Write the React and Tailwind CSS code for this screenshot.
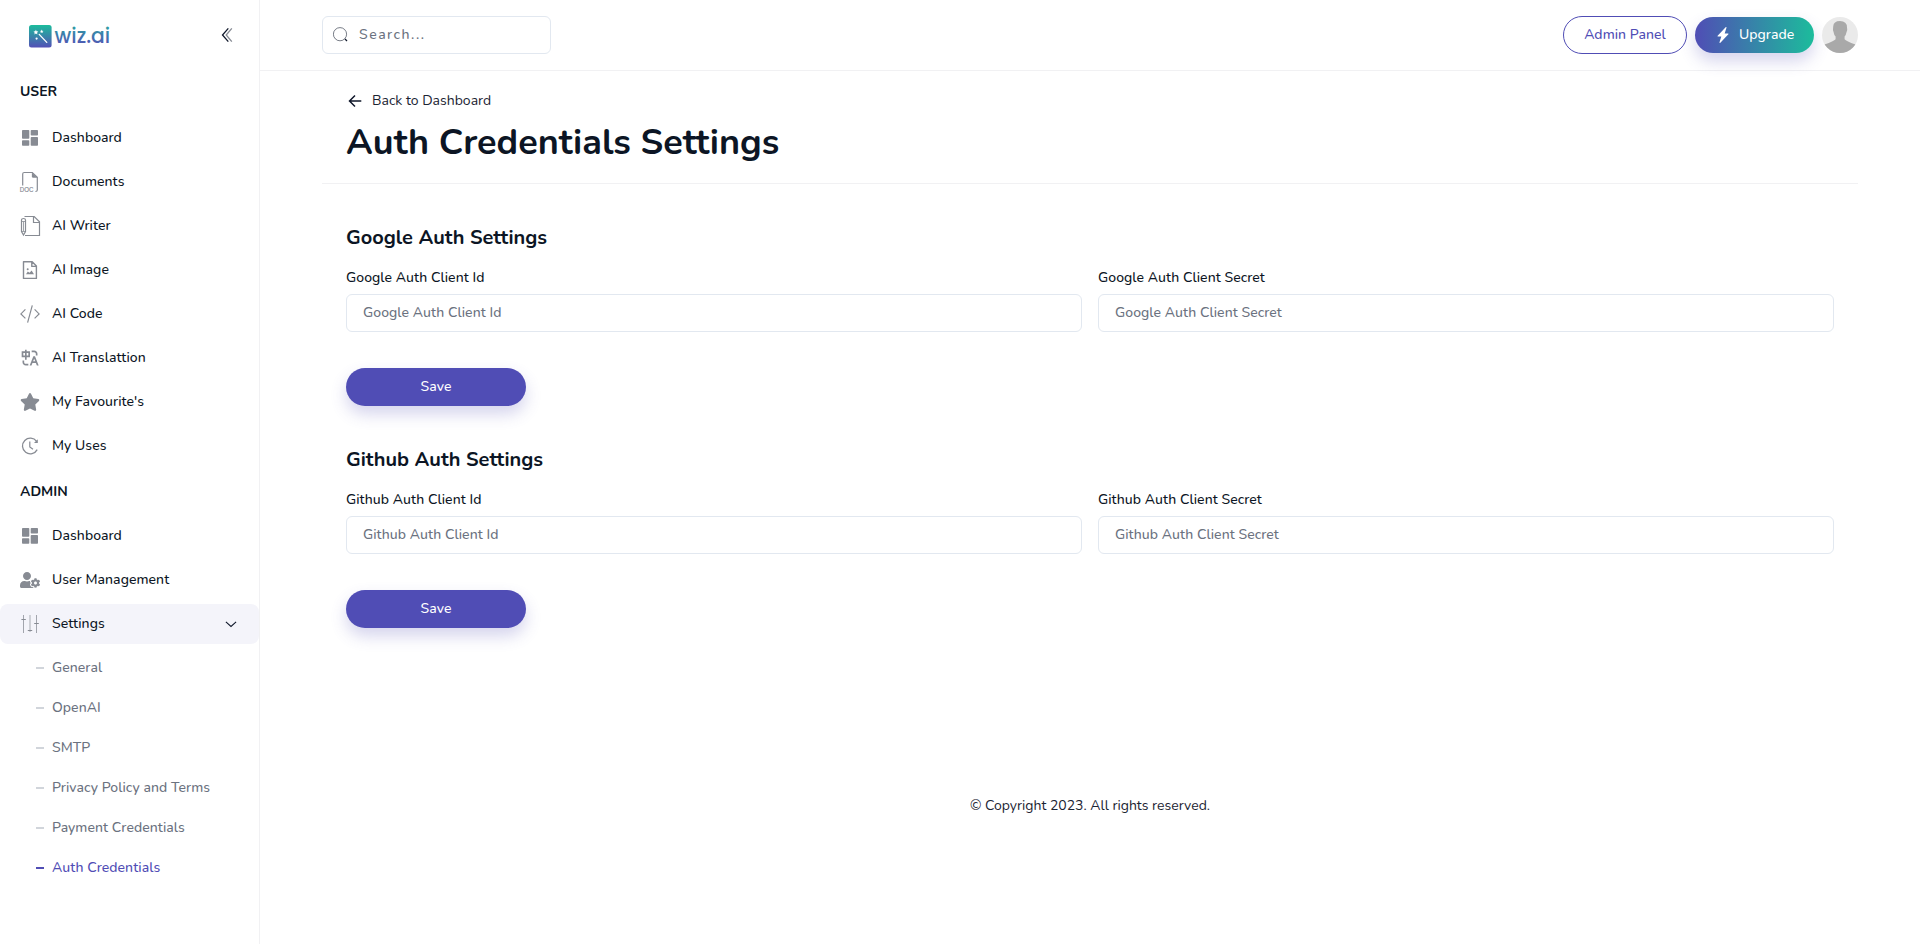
import React from "react";
import { RiTranslate } from "react-icons/ri";
import { FaUserCog, FaStar } from "react-icons/fa";
import { BsLightningChargeFill } from "react-icons/bs";

const Svg = ({ children }) => (
  <svg className="size-5 shrink-0 overflow-visible" viewBox="0 0 20 20" fill="none" stroke="currentColor">
    {children}
  </svg>
);

const DashboardIcon = () => (
  <Svg>
    <g fill="currentColor" stroke="none">
      <rect x="2" y="2" width="7.3" height="8.7" rx="0.8" />
      <rect x="2" y="12.3" width="7.3" height="5.5" rx="0.8" />
      <rect x="10.7" y="2" width="7.3" height="5.5" rx="0.8" />
      <rect x="10.7" y="9.1" width="7.3" height="8.7" rx="0.8" />
    </g>
  </Svg>
);

const DocumentIcon = () => (
  <Svg>
    <path d="M2.7 13.6V2.1Q2.7 .5 4.3 .5H12.3L17.3 5.3V18Q17.3 19.5 15.4 19.5" strokeWidth="1.2" />
    <path d="M11.9 .4L17.4 5.7H13.2Q11.9 5.7 11.9 4.4Z" fill="currentColor" stroke="none" />
    <text x="-0.3" y="19.8" fontSize="7" textLength="13.8" lengthAdjust="spacingAndGlyphs" fill="currentColor" strokeWidth="0.15" fontFamily="Liberation Sans, sans-serif">DOC</text>
  </Svg>
);

const WriterIcon = () => (
  <Svg>
    <path d="M4.5 .5H14.2L19.5 5.8V19.5H5M13.5 .6V6.5H19.4" strokeWidth="1.2" />
    <path d="M1.5 4V15.5L3.5 19L5.5 15.5V4Q5.5 2.5 3.5 2.5T1.5 4Z" strokeWidth="1.2" />
    <path d="M1.5 5.5H5.5M3.5 5.5V15M1.5 15.5H5.5" strokeWidth=".8" />
  </Svg>
);

const ImageIcon = () => (
  <Svg>
    <path d="M3.5 1.8H12.2L16.4 6V18.4H3.5ZM11.8 2V6.4H16.2" strokeWidth="1.4" strokeLinejoin="round" />
    <path d="M6 14.3L7.8 11.4L9.6 12.8L11.6 10.4L14 14.3Z" fill="currentColor" stroke="none" />
    <circle cx="7.7" cy="9.2" r="1" fill="currentColor" stroke="none" />
  </Svg>
);

const CodeIcon = () => (
  <Svg>
    <path d="M5.4 5.4L.9 9.9L5.4 14.4M14.6 5.4L19.1 9.9L14.6 14.4M12.3 1.4L7.6 18.6" strokeWidth="1.2" />
  </Svg>
);

const ClockIcon = () => (
  <Svg>
    <path d="M17.2 13.6A7.8 7.8 0 1 1 16.6 5.4" strokeWidth="1.3" />
    <path d="M17.8 3.2V7H14Z" fill="currentColor" stroke="none" />
    <path d="M9.8 5.6V11L13 13.2" strokeWidth="1.2" />
  </Svg>
);

const SlidersIcon = () => (
  <Svg>
    <path d="M3.5 1V19M16.5 1V19" strokeWidth="1" opacity=".75" />
    <path d="M10 1V18" strokeWidth="2" opacity=".35" />
    <path d="M1.4 5.5H5.8M7.8 16.5H12.2M14.2 9.5H18.8" strokeWidth="1.2" />
  </Svg>
);

const userItems = [
  ["Dashboard", DashboardIcon],
  ["Documents", DocumentIcon],
  ["AI Writer", WriterIcon],
  ["AI Image", ImageIcon],
  ["AI Code", CodeIcon],
  ["AI Translattion", () => <RiTranslate className="size-5 shrink-0" />],
  ["My Favourite's", () => <FaStar className="size-5 shrink-0" />],
  ["My Uses", ClockIcon],
];
const adminItems = [
  ["Dashboard", DashboardIcon],
  ["User Management", () => <FaUserCog className="size-5 shrink-0" />],
];
const subItems = ["General", "OpenAI", "SMTP", "Privacy Policy and Terms", "Payment Credentials", "Auth Credentials"];

function NavItem({ label, icon: Icon, active }) {
  return (
    <a className={`flex h-10 items-center rounded-lg pl-5 pr-[22px] text-sm font-medium tracking-[0.05px] ${active ? "bg-[#f4f4fa]" : ""}`}>
      <span className="text-[#878b93]"><Icon /></span>
      <span className="ml-3 flex-1 pb-px">{label}</span>
      {active && (
        <svg className="h-2 w-3" viewBox="0 0 12 8" fill="none" stroke="#0f172a" strokeWidth="1.1">
          <path d="M.9 1.9L6 6.4L11.1 1.9" />
        </svg>
      )}
    </a>
  );
}

function Logo() {
  return (
    <svg className="h-8 w-24" viewBox="0 0 96 32">
      <defs>
        <linearGradient id="tile" x1="0" y1="0" x2="0" y2="1">
          <stop offset="0" stopColor="#1cbc9c" />
          <stop offset="1" stopColor="#5350b6" />
        </linearGradient>
        <linearGradient id="word" gradientUnits="userSpaceOnUse" x1="0" y1="6" x2="0" y2="27">
          <stop offset="0" stopColor="#2aa3a2" />
          <stop offset="1" stopColor="#5350b6" />
        </linearGradient>
      </defs>
      <rect x="1" y="6" width="22.6" height="22.4" rx="2.5" fill="url(#tile)" />
      <path d="M11.2 15.4L18.8 23.4" stroke="#fff" strokeWidth="1.3" strokeLinecap="round" />
      <path d="M7.9 10.7l.7 1.6 1.7.2-1.2 1.2.3 1.7-1.5-.9-1.5.9.3-1.7-1.2-1.2 1.7-.2z" fill="#fff" />
      <path d="M13.7 10.6l.5 1.2 1.3.1-1 .9.3 1.3-1.1-.7-1.1.7.3-1.3-1-.9 1.3-.1z" fill="#fff" />
      <circle cx="8.6" cy="19.6" r="1.1" fill="#fff" />
      <text x="26.6" y="24.3" fontSize="22" fontWeight="500" fontFamily="Poppins, Quicksand, Nunito, Lato, sans-serif" textLength="55.6" lengthAdjust="spacingAndGlyphs" fill="url(#word)">wiz.ai</text>
    </svg>
  );
}

function Sidebar() {
  return (
    <aside className="flex w-[260px] shrink-0 flex-col border-r border-[#f1f1f3]">
      <div className="flex h-[70px] items-center justify-between pl-7 pr-[26px]">
        <Logo />
        <svg className="h-4 w-3" viewBox="0 0 12 16" fill="none" stroke="#0f172a" strokeWidth="1.3">
          <path d="M7.3 1.4L1.5 8L7.3 14.6" />
          <path d="M10.8 1.4L5.2 8L10.8 14.6" opacity=".5" />
        </svg>
      </div>
      <h2 className="mt-3 pl-5 text-sm font-bold">USER</h2>
      <nav className="mt-4 flex flex-col gap-1">
        {userItems.map(([l, I]) => <NavItem key={l} label={l} icon={I} />)}
      </nav>
      <h2 className="mt-4 pl-5 text-sm font-bold">ADMIN</h2>
      <nav className="mt-[14px] flex flex-col gap-1">
        {adminItems.map(([l, I]) => <NavItem key={l} label={l} icon={I} />)}
        <NavItem label="Settings" icon={SlidersIcon} active />
        <div>
          {subItems.map((l) => {
            const on = l === "Auth Credentials";
            return (
              <a key={l} className={`flex h-10 items-center gap-2 pl-9 text-sm font-medium tracking-[0.05px] ${on ? "text-[#504db5]" : "text-[#6b7280]"}`}>
                <span className={`h-0.5 w-2 ${on ? "bg-[#504db5]" : "bg-[#d1d5db]"}`} />
                <span className="pb-px">{l}</span>
              </a>
            );
          })}
        </div>
      </nav>
    </aside>
  );
}

function Header() {
  return (
    <header className="border-b border-[#f1f1f3]">
      <div className="mx-auto flex h-[70px] max-w-[1536px] items-center justify-between">
        <div className="flex h-[38px] w-[229px] items-center rounded-md border border-[#e2e8f0] pl-2.5">
          <svg className="size-4" viewBox="0 0 16 16" fill="none" stroke="#0f172a">
            <circle cx="7" cy="7.2" r="6.6" strokeWidth=".7" opacity=".8" />
            <path d="M12 12L14 14" strokeWidth="1.3" />
          </svg>
          <span className="ml-2.5 pb-px text-sm font-medium tracking-[1.5px] text-[#6b7280]">Search...</span>
        </div>
        <div className="flex items-center gap-2">
          <button className="h-[38px] w-[124px] rounded-full border border-[#504db5] pb-px text-sm font-medium tracking-[0.05px] text-[#504db5]">Admin Panel</button>
          <button className="flex h-9 w-[119px] items-center rounded-full bg-linear-to-r/srgb from-[#504db5] to-[#1cbc9c] pl-5 text-sm font-medium tracking-[0.05px] text-white shadow-[0_8px_16px_rgba(80,77,181,0.24)]">
            <BsLightningChargeFill className="size-4" />
            <span className="ml-2 pb-px">Upgrade</span>
          </button>
          <svg className="size-9 rounded-full" viewBox="0 0 36 36">
            <rect width="36" height="36" fill="#eaeaea" />
            <path d="M18 4Q25 4 25 10.5Q25.8 13 24.4 15.4Q24 18 22.6 19.6V22.2Q24 24 33.5 27.5V36H2.5V27.5Q12 24 13.6 22.2V19.6Q12 18 11.7 15.4Q10.5 13 11.2 9.5Q11.5 4 18 4Z" fill="#a9a9a9" />
          </svg>
        </div>
      </div>
    </header>
  );
}

function Field({ label }) {
  return (
    <label className="block text-sm font-medium tracking-[0.05px]">
      {label}
      <input placeholder={label} className="mt-1.5 block h-[38px] w-full rounded-md border border-[#e2e8f0] px-4 pb-px tracking-[0.05px] placeholder:text-[#6b7280]" />
    </label>
  );
}

function Section({ name }) {
  return (
    <section className="h-[222px]">
      <h2 className="text-xl font-bold leading-7">{name} Auth Settings</h2>
      <div className="mt-4 grid grid-cols-2 gap-4">
        <Field label={`${name} Auth Client Id`} />
        <Field label={`${name} Auth Client Secret`} />
      </div>
      <button className="mt-9 h-[38px] w-[180px] rounded-full bg-[#504db5] pb-px text-sm font-medium tracking-[0.05px] text-white shadow-[0_8px_16px_rgba(80,77,181,0.24)]">Save</button>
    </section>
  );
}

export default function App() {
  return (
    <div className="flex h-[944px] overflow-hidden bg-white font-['Nunito','Lato',sans-serif] text-[#0c1524]">
      <Sidebar />
      <div className="flex flex-1 flex-col">
        <Header />
        <main className="mx-auto w-full max-w-[1536px]">
          <div className="h-[113px] border-b border-[#f1f1f3] px-6 pt-5">
            <a className="flex items-center text-sm text-[#1b2432]">
              <svg className="size-[18px]" viewBox="0 0 18 18" fill="none" stroke="#0f172a" strokeWidth="1.5">
                <path d="M15.3 9H4M9 3.5L3.5 9L9 14.5" />
              </svg>
              <span className="ml-2">Back to Dashboard</span>
            </a>
            <h1 className="mt-3 text-4xl font-bold leading-[40px]">Auth Credentials Settings</h1>
          </div>
          <div className="px-6 pt-10">
            <Section name="Google" />
            <Section name="Github" />
          </div>
          <p className="mt-[128px] text-center text-sm text-[#1b2432]">© Copyright 2023. All rights reserved.</p>
        </main>
      </div>
    </div>
  );
}
